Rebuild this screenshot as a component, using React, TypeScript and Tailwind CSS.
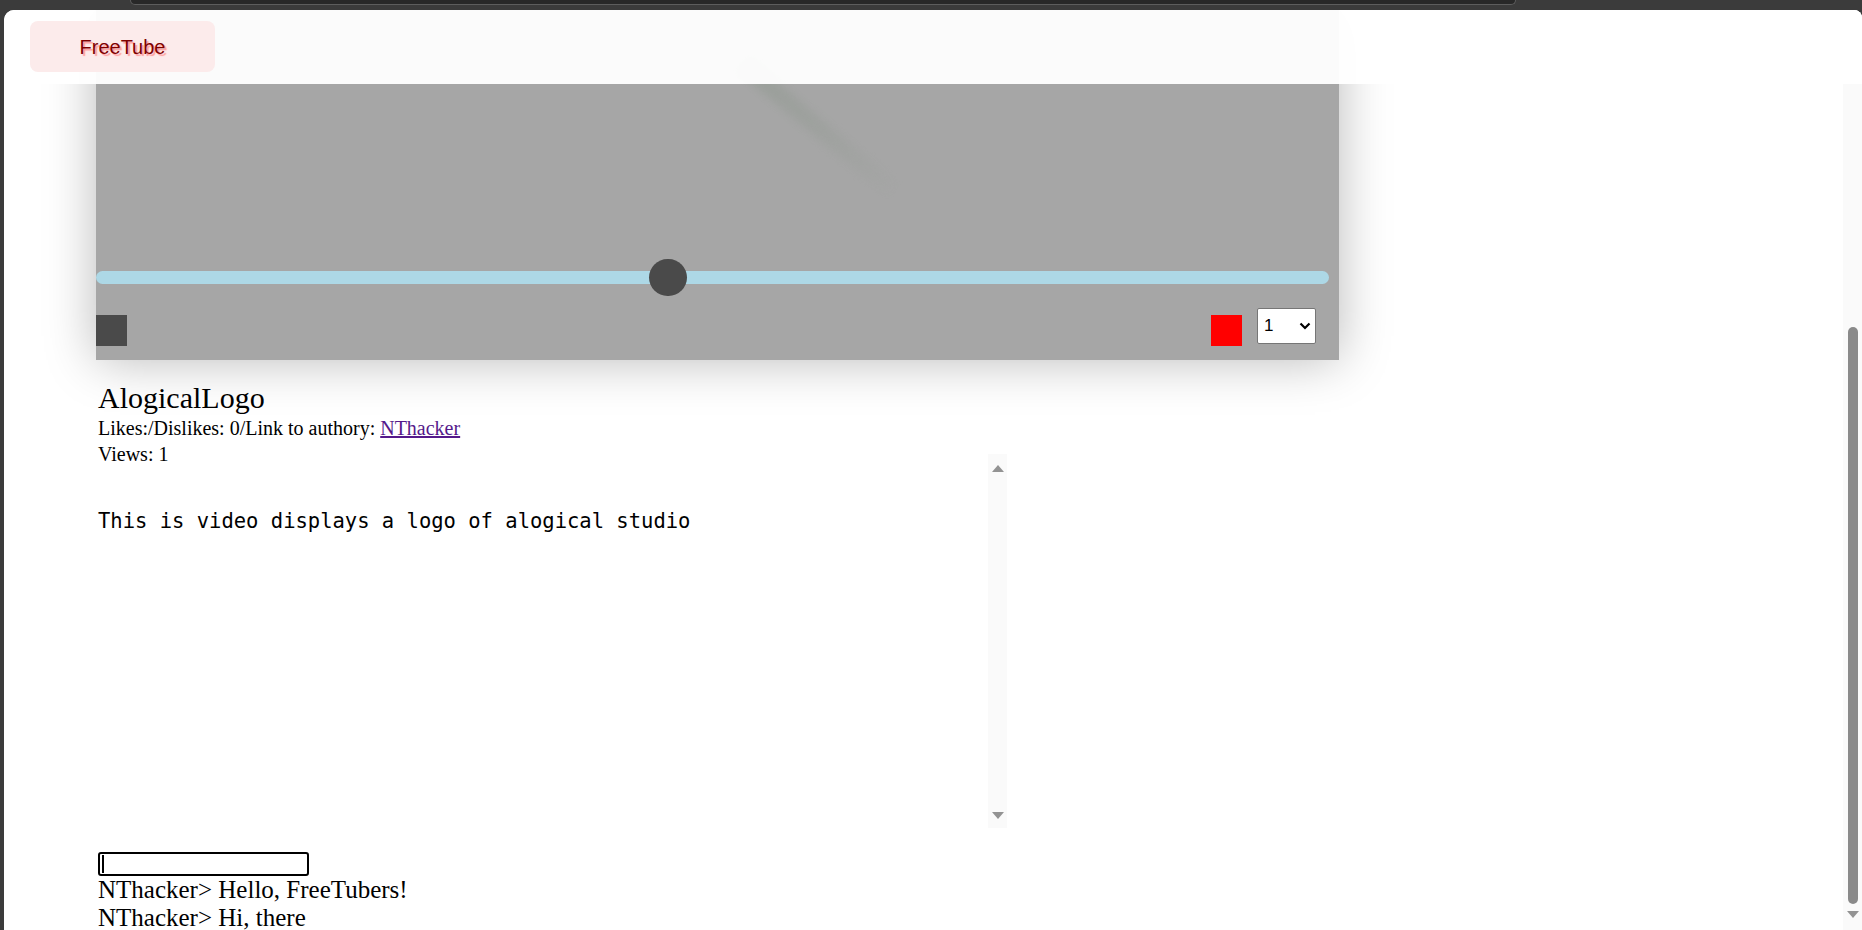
const serif = "font-['Liberation_Serif','Times_New_Roman',serif]";

function ScrollArrow({ down = false }: { down?: boolean }) {
  return (
    <svg width="14" height="9" viewBox="0 0 14 9" className="shrink-0">
      <path d={down ? "M1 1 H13 L7 8 Z" : "M1 8 H13 L7 1 Z"} fill="#939393" />
    </svg>
  );
}

function VideoPlayer() {
  return (
    <div className="relative ml-[92px] flex h-[350px] w-[1243px] flex-col justify-end bg-[#a6a6a6] pb-[14px] shadow-[0_0_48px_rgba(0,0,0,0.28)]">
      {/* faint frame of the logo video */}
      <div className="absolute left-[716px] top-[20px] h-[200px] w-[18px] -rotate-[50deg] bg-gradient-to-b from-[#959c95] via-[#9ca09c] to-transparent opacity-70 blur-[4px]" />

      {/* seek bar */}
      <div className="relative h-[13px] w-[1233px] rounded-full bg-[#add8e6]">
        <div className="absolute left-[553px] top-[-12px] h-[37px] w-[38px] rounded-full bg-[#4a4a4a]" />
      </div>

      {/* controls */}
      <div className="mt-[24px] flex items-end pr-[23px]">
        <button className="h-[31px] w-[31px] bg-[#4a4a4a]" aria-label="play" />
        <button className="ml-auto h-[31px] w-[31px] bg-[#ff0000]" aria-label="stop" />
        <div className="relative mb-[2px] ml-[15px] h-[36px] w-[59px]">
          <select className="h-full w-full appearance-none rounded-[2px] border border-[#767676] bg-white pl-[6px] font-['Liberation_Sans',Arial,sans-serif] text-[17px] text-black">
            <option>1</option>
            <option>2</option>
          </select>
          <svg width="12" height="8" viewBox="0 0 12 8" className="pointer-events-none absolute right-[5px] top-[14px]">
            <path d="M1.5 1.5 L6 6 L10.5 1.5" fill="none" stroke="#000" strokeWidth="2.2" />
          </svg>
        </div>
      </div>
    </div>
  );
}

function VideoInfo() {
  return (
    <div className={`ml-[94px] mt-[20px] text-black ${serif}`}>
      <h2 className="text-[30px] font-normal leading-[35px]">AlogicalLogo</h2>
      <p className="text-[20px] leading-[26px]">
        Likes:/Dislikes: 0/Link to authory:{" "}
        <a href="#" className="text-[#551a8b] underline">
          NThacker
        </a>
      </p>
      <p className="text-[20px] leading-[26px]">Views: 1</p>
    </div>
  );
}

function Description() {
  return (
    <div className="-mt-[13px] ml-[94px] flex h-[374px] w-[909px]">
      <pre className="flex-1 pt-[55px] font-['DejaVu_Sans_Mono',monospace] text-[20.5px] leading-[24px] text-black">
        This is video displays a logo of alogical studio
      </pre>
      <div className="flex w-[19px] flex-col items-center justify-between bg-[#fafafa] pb-[8px] pt-[10px]">
        <ScrollArrow />
        <ScrollArrow down />
      </div>
    </div>
  );
}

function Chat() {
  const messages = [
    { user: "NThacker", text: "Hello, FreeTubers!" },
    { user: "NThacker", text: "Hi, there" },
  ];
  return (
    <div className={`ml-[94px] mt-[24px] ${serif}`}>
      <div className="relative h-[24px] w-[211px] rounded-[3px] border-2 border-black">
        <input className="h-full w-full bg-transparent caret-transparent outline-none" />
        <span className="absolute left-[2px] top-[1px] h-[18px] w-[2px] bg-black" />
      </div>
      {messages.map((m, i) => (
        <div key={i} className="text-[25px] leading-[28px] text-black">
          {m.user}&gt; {m.text}
        </div>
      ))}
    </div>
  );
}

export default function App() {
  return (
    <div className="flex h-[930px] w-[1862px] flex-col overflow-hidden bg-[#3b3b3b]">
      {/* browser chrome strip */}
      <div className="h-[10px] shrink-0 pl-[130px]">
        <div className="h-[5px] w-[1386px] rounded-b-[8px] border-x border-b border-[#5d5d5d] bg-[#282828]" />
      </div>

      <div className="relative ml-[4px] flex min-h-0 flex-1 overflow-hidden rounded-tl-[10px] rounded-tr-[8px] bg-white">
        {/* header overlays the scrolled page */}
        <header className="absolute inset-x-0 top-0 z-10 h-[74px] bg-white/95 pl-[26px] pt-[11px]">
          <div className="flex h-[51px] w-[185px] items-center justify-center rounded-[8px] bg-[#fcebeb]">
            <span className="font-['Liberation_Sans',Arial,sans-serif] text-[20px] text-[#800000] [text-shadow:2px_2px_1px_#ff9a9a]">
              FreeTube
            </span>
          </div>
        </header>

        <main className="min-w-0 flex-1">
          <VideoPlayer />
          <VideoInfo />
          <Description />
          <Chat />
        </main>

        {/* page scrollbar */}
        <div className="flex w-[19px] shrink-0 flex-col items-center bg-[#fafafa] pt-[317px]">
          <div className="h-[577px] w-[10px] rounded-full bg-[#8a8a8a]" />
          <div className="mt-[6px]">
            <ScrollArrow down />
          </div>
        </div>
      </div>
    </div>
  );
}
